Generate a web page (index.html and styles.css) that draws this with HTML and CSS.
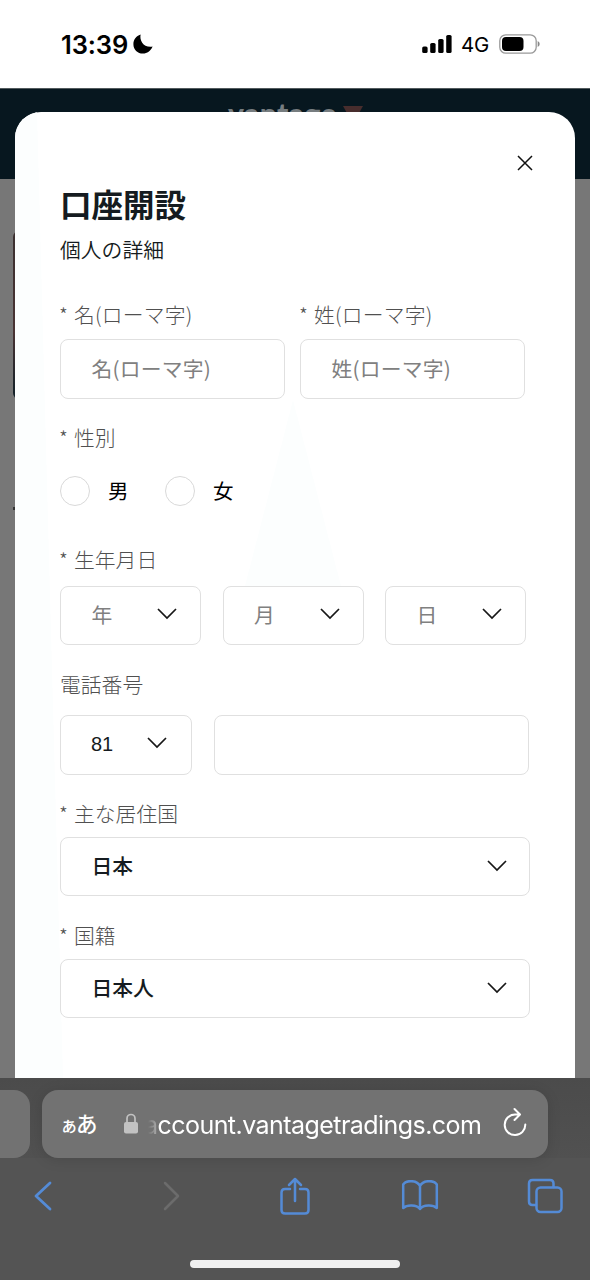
FILE: index.html
```html
<!DOCTYPE html>
<html lang="ja">
<head>
<meta charset="utf-8">
<title>口座開設</title>
<link rel="stylesheet" href="styles.css">
</head>
<body>
<div class="phone">
  <header class="status">
    <span class="clock">13:39</span>
    <svg class="moon" width="20" height="20" viewBox="0 0 20 20"><path d="M7.600.4C6.300 6.500 10.500 14 19.600 12.600 17.500 17.300 14.200 19.600 10 19.600 4.500 19.600.4 15.500.4 10.200.4 5.600 3.100 1.900 7.600.4z"/></svg>
    <span class="spacer"></span>
    <svg class="signal" width="31" height="20" viewBox="0 0 31 20"><rect x=".2" y="12.500" width="5.400" height="6.500" rx="1.600"/><rect x="8.200" y="9" width="5.400" height="10" rx="1.600"/><rect x="16.200" y="5" width="5.400" height="14" rx="1.600"/><rect x="24.200" y="1" width="5.400" height="18" rx="1.600"/></svg>
    <span class="network">4G</span>
    <svg class="battery" width="42" height="20" viewBox="0 0 42 20"><rect x=".8" y=".8" width="36.400" height="18.400" rx="6" fill="none" stroke="#999" stroke-width="1.300"/><rect x="3" y="3" width="21.500" height="14" rx="4"/><path d="M38.700 7v6q2-1 2-3t-2-3z" fill="#888"/></svg>
  </header>

  <main class="viewport">
    <div class="page">
      <div class="brand-bar">
        <span class="brand">vantage</span>
        <svg class="brand-mark" width="20" height="18" viewBox="0 0 20 18"><path d="M0 0h20L10 18z" fill="#472d2d"/></svg>
      </div>
      <div class="page-body"><span class="banner-edge"></span><span class="dot"></span></div>
    </div>

    <section class="modal">
      <svg class="wash" width="560" height="966" viewBox="0 0 560 966"><path d="M0 0h22L48 966H0zM278 288L326 474H230z"/></svg>
      <div class="close-row"><svg width="16" height="16" viewBox="0 0 16 16"><path d="M1 1l14 14M15 1L1 15"/></svg></div>
      <h1 class="title">口座開設</h1>
      <p class="subtitle">個人の詳細</p>

      <div class="row names">
        <div class="field"><label class="label"><i>*</i>名(ローマ字)</label><div class="box placeholder">名(ローマ字)</div></div>
        <div class="field"><label class="label"><i>*</i>姓(ローマ字)</label><div class="box placeholder">姓(ローマ字)</div></div>
      </div>

      <div class="field gender">
        <span class="label"><i>*</i>性別</span>
        <div class="radios"><span class="radio"></span><span class="choice">男</span><span class="radio"></span><span class="choice">女</span></div>
      </div>

      <div class="field birth">
        <span class="label"><i>*</i>生年月日</span>
        <div class="row dates">
          <div class="box select placeholder">年<svg class="chevron" width="20" height="12" viewBox="0 0 20 12"><path d="M1 1l9 9 9-9"/></svg></div>
          <div class="box select placeholder">月<svg class="chevron" width="20" height="12" viewBox="0 0 20 12"><path d="M1 1l9 9 9-9"/></svg></div>
          <div class="box select placeholder">日<svg class="chevron" width="20" height="12" viewBox="0 0 20 12"><path d="M1 1l9 9 9-9"/></svg></div>
        </div>
      </div>

      <div class="field phone-field">
        <span class="label">電話番号</span>
        <div class="row phone-row">
          <div class="box select code">81<svg class="chevron" width="20" height="12" viewBox="0 0 20 12"><path d="M1 1l9 9 9-9"/></svg></div>
          <div class="box"></div>
        </div>
      </div>

      <div class="field country">
        <span class="label"><i>*</i>主な居住国</span>
        <div class="box select value">日本<svg class="chevron" width="20" height="12" viewBox="0 0 20 12"><path d="M1 1l9 9 9-9"/></svg></div>
      </div>

      <div class="field country nationality">
        <span class="label"><i>*</i>国籍</span>
        <div class="box select value">日本人<svg class="chevron" width="20" height="12" viewBox="0 0 20 12"><path d="M1 1l9 9 9-9"/></svg></div>
      </div>
    </section>
  </main>

  <footer class="browser">
    <div class="tabs">
      <div class="prev-tab"></div>
      <div class="address">
        <span class="reader"><small>ぁ</small>あ</span>
        <svg class="lock" width="14" height="21" viewBox="0 0 14 21"><path d="M3 10V5.500a4 4 0 0 1 8 0V10" fill="none" stroke="#c2c2c2" stroke-width="1.700"/><rect y="9" width="14" height="11.500" rx="2" fill="#c2c2c2"/></svg>
        <span class="url">account.vantagetradings.com</span>
        <svg class="reload" width="26" height="30" viewBox="0 0 26 30"><path d="M17.500 7.500H13A10.300 10.300 0 1 0 23.300 17.500M12.500 2l5.500 5.500-5.500 5.500"/></svg>
      </div>
    </div>
    <nav class="tools">
      <svg width="20" height="30" viewBox="0 0 20 30"><path d="M17 2L3 15l14 13" stroke-width="2.800"/></svg>
      <svg class="forward" width="20" height="30" viewBox="0 0 20 30"><path d="M3 2l13 13L3 28"/></svg>
      <svg class="share" width="32" height="38" viewBox="0 0 32 38"><path d="M11 12H6q-3.500 0-3.500 3.500V33q0 3.500 3.500 3.500h20q3.500 0 3.500-3.500V15.500Q29.500 12 26 12h-5M16 24V2M10 8l6-6 6 6"/></svg>
      <svg class="bookmarks" width="38" height="32" viewBox="0 0 38 32"><path d="M19 6C16-.2 5-.2 2.200 4.500V28C6 24.500 15.500 24.500 19 29c3.500-4.500 13-4.500 16.800-1V4.500C33-.2 22-.2 19 6v23"/></svg>
      <svg class="all-tabs" width="36" height="36" viewBox="0 0 36 36"><path d="M9 27H5.500Q2 27 2 23.500v-18Q2 2 5.500 2H23q3.500 0 3.500 3.500V9"/><rect x="9.500" y="9.500" width="25" height="24.500" rx="4"/></svg>
    </nav>
    <div class="home"></div>
  </footer>
</div>
</body>
</html>
```
FILE: styles.css
```css
* { box-sizing: border-box; }
body { margin: 0; font-family: "Noto Sans CJK JP", sans-serif; }
.phone { width: 590px; height: 1280px; display: grid; grid-template-rows: 88px 990px 202px; overflow: hidden; background: #fff; }

.status { display: flex; align-items: center; padding: 0 49px 0 61px; font-family: Inter, sans-serif; color: #000; }
.clock { font-size: 25.500px; font-weight: 600; width: 72px; letter-spacing: -.1px; }
.spacer { flex: 1; }
.network { font-size: 20.500px; font-weight: 400; letter-spacing: -.3px; width: 38px; margin-left: 8px; }

.viewport { display: grid; grid-template: 989px / 590px; overflow: hidden; border-top: 1px solid #525a5d; }
.page, .modal { grid-area: 1 / 1; }
.page { display: grid; grid-template-rows: 90px 1fr; background: #777; }
.brand-bar { background: #07171f; display: flex; align-items: flex-start; padding: 9px 0 0 228px; }
.brand { font: 900 30px/30px Lato, sans-serif; color: #777d80; width: 115px; letter-spacing: .4px; }
.brand-mark { margin-top: 8px; }
.page-body { display: flex; flex-direction: column; padding: 52px 0 0 13px; }
.banner-edge { width: 12px; height: 168px; border-radius: 10px; background: linear-gradient(#3b3030, #493333 60%, #102028); }
.dot { width: 3px; height: 3px; background: #333; margin-top: 108px; }

.modal { display: grid; grid-template-rows: 40px 46px 42px auto; align-content: start; margin: 23px 15px 0; padding: 31px 0 0 45px; border-radius: 26px 26px 0 0; background: #fff; position: relative; width: 560px; height: 966px; }
.modal > * { position: relative; }
.modal > .wash { position: absolute; inset: 0; fill: #fcfefe; border-radius: 26px 0 0; }
.close-row { display: flex; justify-content: flex-end; align-items: center; padding-right: 42px; }
.close-row path { fill: none; stroke: #111; stroke-width: 1.500; }
.title { margin: 0; font-size: 31.500px; line-height: 40px; font-weight: 700; color: #151b20; }
.subtitle { margin: 0; font-size: 20.800px; line-height: 41px; font-weight: 350; color: #151b20; }
.row { display: grid; }
.names { grid-template-columns: 225px 225px; gap: 15px; margin-top: 29px; }
.field { display: grid; }
.label { display: block; height: 30px; line-height: 28px; font-size: 20.800px; font-weight: 300; color: #505050; white-space: nowrap; }
.names .label, .names .box { letter-spacing: .2px; }
.label i { display: inline-block; width: 15px; margin-left: -1px; font-style: normal; font-size: 20px; }
.box { height: 60px; border: 1.500px solid #e0e0e0; border-radius: 8px; background: #fff; padding: 0 23px 3px 30.500px; font-size: 20.800px; display: flex; align-items: center; color: #151b20; }
.placeholder { color: #808080; }
.names .box { margin-top: 9px; }
.gender { margin-top: 24px; }
.radios { display: flex; align-items: center; height: 30px; margin-top: 23px; }
.radio { width: 30px; height: 30px; border: 1px solid #d9d9d9; border-radius: 50%; background: #fff; }
.choice { width: 57px; margin: -3px 0 0 18px; font-size: 20.500px; }
.birth { margin-top: 39px; }
.dates { grid-template-columns: repeat(3, 141px); gap: 21.500px; margin-top: 11px; }
.select { justify-content: space-between; }
.chevron { margin-top: -1px; fill: none; stroke: #171717; stroke-width: 1.700; }
.dates .box, .country .box { height: 59px; }
.phone-field { margin-top: 25px; }
.phone-row { grid-template-columns: 132px 315px; gap: 22px; margin-top: 15px; }
.code { font-family: "Liberation Sans", sans-serif; font-size: 20px; padding: 0 24px 1px 30px; }
.code .chevron { margin-top: -3px; }
.country { margin-top: 24px; }
.country .box { width: 470px; margin-top: 8px; padding-right: 22px; }
.country .chevron { margin-top: 1px; }
.nationality { margin-top: 25px; }
.value { font-weight: 500; }

.browser { display: grid; grid-template-rows: 80px 76px 1fr; background: #545454; }
.tabs { display: flex; gap: 12px; padding-top: 12px; background: linear-gradient(#4b4b4b, #515151); }
.prev-tab { width: 30px; height: 68px; border-radius: 0 16px 16px 0; background: #727272; }
.address { width: 506px; height: 68px; border-radius: 16px; background: #727272; box-shadow: 0 2px 14px #0000001f; display: flex; align-items: center; padding: 0 20px 0 18px; color: #fff; }
.reader { width: 64px; margin-top: -3px; font-size: 21.500px; font-weight: 500; white-space: nowrap; }
.reader small { font-size: 18px; margin-right: -2px; }
.lock { margin-top: -2px; }
.url { margin-left: 6px; width: 341px; font: 400 25px/36px Inter, sans-serif; letter-spacing: -.55px; white-space: nowrap; -webkit-mask-image: linear-gradient(90deg, transparent 4px, #0006 13px, #000 14px); mask-image: linear-gradient(90deg, transparent 4px, #0006 13px, #000 14px); }
.url { padding-top: 2px; }
.reload { margin: -4px 0 0 17px; fill: none; stroke: #fff; stroke-width: 2; stroke-linecap: round; stroke-linejoin: round; }
.tools { display: flex; align-items: center; padding-left: 33px; }
.tools svg { fill: none; stroke: #548bd6; stroke-width: 2.500; stroke-linecap: round; stroke-linejoin: round; }
.tools .forward { stroke: #6c6c6c; margin-left: 109px; }
.share { margin-left: 97px; }
.bookmarks { margin-left: 90px; }
.all-tabs { margin-left: 88px; }
.home { width: 210px; height: 8px; margin: 26px auto 0; border-radius: 4px; background: #f0f0f0; }
```
